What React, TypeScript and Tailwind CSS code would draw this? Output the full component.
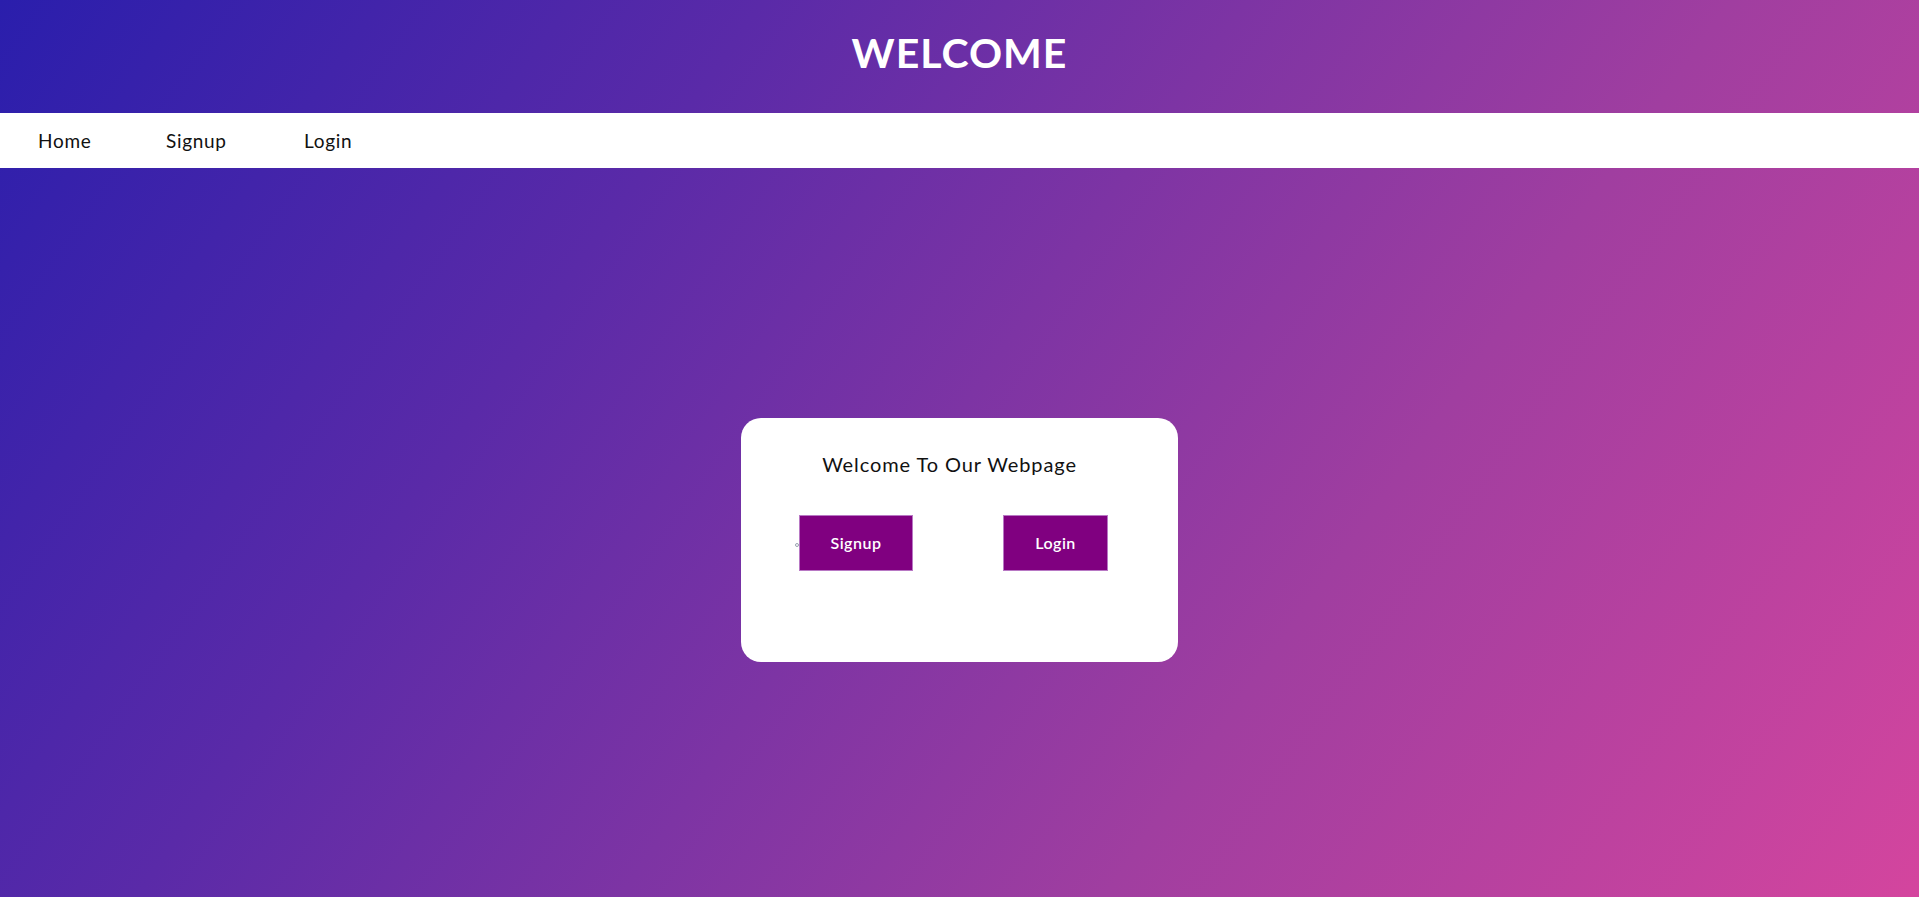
const font = { fontFamily: "Lato, 'Open Sans', sans-serif" };

const navLinks = [
    { label: "Home", width: "w-[128px]" },
    { label: "Signup", width: "w-[138px]" },
    { label: "Login", width: "w-[120px]" },
];

export default function App() {
    return (
        <div
            className="min-h-screen w-full flex flex-col bg-[linear-gradient(125deg,#2a1eac_0%,#5a2aa8_30%,#a03ea0_68%,#d4459e_100%)]"
            style={font}
        >
            <header className="h-[113px] flex items-center justify-center">
                <h1 className="text-white font-bold text-[41px] tracking-[1px] leading-none -mt-[8px]">WELCOME</h1>
            </header>

            <nav className="h-[55px] bg-white flex items-center pl-[38px]">
                {navLinks.map((link) => (
                    <a
                        key={link.label}
                        href="#"
                        className={`${link.width} text-[19px] text-[#111] tracking-[0.7px] leading-none`}
                    >
                        {link.label}
                    </a>
                ))}
            </nav>

            <main className="flex-1 flex justify-center pt-[250px]">
                <div className="w-[437px] h-[244px] bg-white rounded-[20px] flex flex-col">
                    <h2 className="text-[20px] text-[#111] text-center pr-[20px] pt-[34px] tracking-[0.9px] leading-[24px]">
                        Welcome To Our Webpage
                    </h2>
                    <div className="flex items-center pl-[54px] mt-[39px]">
                        <span className="w-[4px] h-[4px] rounded-full border border-gray-400 mt-[4px]" />
                        <button className="h-[56px] w-[114px] bg-[#800080] border border-[#b878c4] text-white text-[16px] tracking-[0.5px] font-semibold">
                            Signup
                        </button>
                        <button className="h-[56px] w-[105px] ml-[90px] bg-[#800080] border border-[#b878c4] text-white text-[16px] tracking-[0.5px] font-semibold">
                            Login
                        </button>
                    </div>
                </div>
            </main>
        </div>
    );
}
